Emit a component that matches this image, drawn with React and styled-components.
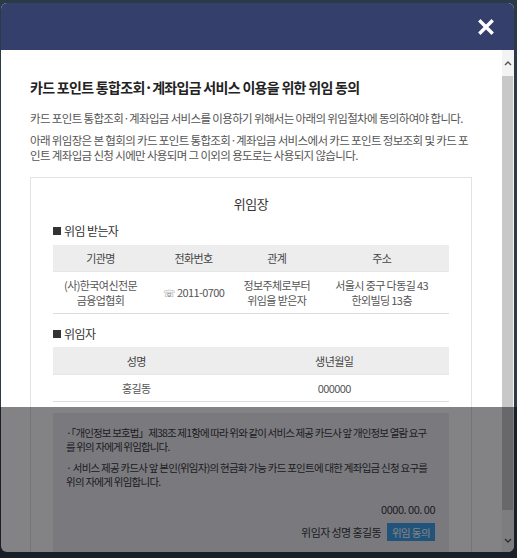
import React from 'react';
import styled, { createGlobalStyle } from 'styled-components';

const GlobalStyle = createGlobalStyle`
  html, body {
    margin: 0;
    padding: 0;
  }
  body {
    background: #2c3947;
    font-family: "Noto Sans CJK KR", "Noto Sans", sans-serif;
  }
`;

const Page = styled.div`
  position: relative;
  height: 558px;
  padding: 3px 3px 6px 1px;
  box-sizing: border-box;
  overflow: hidden;
`;

const Modal = styled.div`
  height: 100%;
  display: flex;
  flex-direction: column;
  border-radius: 6px;
  overflow: hidden;
  background: #fff;
`;

const Header = styled.div`
  height: 47px;
  flex: none;
  background: #343f6c;
  display: flex;
  align-items: center;
  justify-content: flex-end;
  padding-right: 19px;
`;

const CloseButton = styled.button`
  border: 0;
  background: none;
  padding: 0;
  width: 18px;
  height: 18px;
  display: flex;
  align-items: center;
  justify-content: center;
  cursor: pointer;
`;

const Body = styled.div`
  flex: 1;
  display: flex;
  min-height: 0;
`;

const Content = styled.div`
  flex: 1;
  padding: 28px 30px 0 29px;
  overflow: hidden;
  color: #555;
`;

const Rail = styled.div`
  width: 12px;
  flex: none;
  background: #f3f3f3;
  display: flex;
  flex-direction: column;
`;

const RailArrow = styled.div`
  height: ${p => p.$h}px;
  flex: none;
  display: flex;
  align-items: ${p => (p.$down ? 'flex-end' : 'center')};
  padding-bottom: ${p => (p.$down ? 9 : 0)}px;
  box-sizing: border-box;
  justify-content: center;
`;

const Thumb = styled.div`
  flex: 1;
  background: #c8c8c8;
  margin-right: 1px;
`;

const Title = styled.h1`
  margin: 0;
  font-size: 14px;
  line-height: 18px;
  font-weight: 700;
  letter-spacing: -0.7px;
  color: #222;
  white-space: nowrap;
`;

const Para = styled.p`
  margin: ${p => p.$mt}px 0 0;
  font-size: 11.5px;
  line-height: 15px;
  letter-spacing: -0.65px;
  color: #555;
  word-break: break-all;
`;

const Card = styled.div`
  margin-top: 14px;
  border: 1px solid #e3e3e3;
  padding: 17px 22px 40px;
`;

const CardTitle = styled.div`
  text-align: center;
  font-size: 13px;
  line-height: 18px;
  letter-spacing: -0.5px;
  color: #333;
`;

const SectionLabel = styled.div`
  margin-top: ${p => p.$mt}px;
  font-size: 12px;
  line-height: 16px;
  letter-spacing: -0.6px;
  color: #333;
  display: flex;
  align-items: center;
  gap: 2px;

  &::before {
    content: '';
    width: 8px;
    height: 8px;
    background: #333;
    margin-right: 1px;
  }
`;

const Table = styled.table`
  width: 100%;
  margin-top: ${p => p.$mt}px;
  border-collapse: collapse;
  table-layout: fixed;
  border-bottom: 1px solid #dcdcdc;
`;

const Th = styled.th`
  width: ${p => p.$w};
  height: ${p => p.$h}px;
  padding: 0;
  background: #ededed;
  font-weight: 400;
  font-size: 11px;
  letter-spacing: -0.6px;
  color: #444;
  text-align: center;
`;

const Td = styled.td`
  height: ${p => p.$h}px;
  padding: 0;
  font-size: 11px;
  line-height: 15px;
  letter-spacing: -0.6px;
  color: #555;
  text-align: center;
  border-top: 1px solid #e6e6e6;
`;

const Phone = styled.span`
  font-family: "DejaVu Sans", sans-serif;
  font-size: 10px;
  margin-right: 2px;
  color: #777;
`;

const Notice = styled.div`
  margin-top: 11px;
  background: #ececef;
  padding: 13px 14px 14px 13px;
`;

const Bullet = styled.p`
  margin: ${p => p.$mt}px 0 0;
  font-size: 10.5px;
  line-height: 14px;
  letter-spacing: ${p => p.$ls}px;
  color: #333;
  word-break: break-all;
`;

const DateLine = styled.div`
  margin-top: 12px;
  text-align: right;
  font-size: 11px;
  line-height: 16px;
  letter-spacing: -0.5px;
  color: #333;
`;

const SignRow = styled.div`
  margin-top: 6px;
  display: flex;
  justify-content: flex-end;
  align-items: center;
  gap: 6px;
  font-size: 11px;
  letter-spacing: -0.6px;
  color: #333;
`;

const AgreeButton = styled.button`
  border: 0;
  height: 18px;
  padding: 0 5px;
  background: #3a9fe8;
  color: #fff;
  font-family: inherit;
  font-size: 10.5px;
  letter-spacing: -0.6px;
`;

const Shade = styled.div`
  position: absolute;
  left: 0;
  right: 0;
  top: 407px;
  bottom: 0;
  background: rgba(8, 8, 14, 0.5);
  pointer-events: none;
`;

const Chevron = ({ down }) => (
  <svg width="8" height="5" viewBox="0 0 8 5">
    <polyline
      points={down ? '1,1 4,4 7,1' : '1,4 4,1 7,4'}
      fill="none"
      stroke="#555"
      strokeWidth="1.4"
    />
  </svg>
);

const App = () => (
  <>
    <GlobalStyle />
    <Page>
      <Modal>
        <Header>
          <CloseButton aria-label="닫기">
            <svg width="16" height="16" viewBox="0 0 16 16">
              <path d="M2.5 2.5 L13.5 13.5 M13.5 2.5 L2.5 13.5" stroke="#fff" strokeWidth="3.4" strokeLinecap="square" />
            </svg>
          </CloseButton>
        </Header>
        <Body>
          <Content>
            <Title>카드 포인트 통합조회·계좌입금 서비스 이용을 위한 위임 동의</Title>
            <Para $mt={15}>
              카드 포인트 통합조회·계좌입금 서비스를 이용하기 위해서는 아래의 위임절차에 동의하여야 합니다.
            </Para>
            <Para $mt={7}>
              아래 위임장은 본 협회의 카드 포인트 통합조회·계좌입금 서비스에서 카드 포인트 정보조회 및 카드 포인트 계좌입금 신청 시에만 사용되며 그 이외의 용도로는 사용되지 않습니다.
            </Para>

            <Card>
              <CardTitle>위임장</CardTitle>

              <SectionLabel $mt={10}>위임 받는자</SectionLabel>
              <Table $mt={6}>
                <thead>
                  <tr>
                    <Th $w="24%" $h={26}>기관명</Th>
                    <Th $w="23%" $h={26}>전화번호</Th>
                    <Th $w="19%" $h={26}>관계</Th>
                    <Th $w="34%" $h={26}>주소</Th>
                  </tr>
                </thead>
                <tbody>
                  <tr>
                    <Td $h={41}>(사)한국여신전문<br />금융업협회</Td>
                    <Td $h={41}><Phone>☏</Phone>2011-0700</Td>
                    <Td $h={41}>정보주체로부터<br />위임을 받은자</Td>
                    <Td $h={41}>서울시 중구 다동길 43<br />한외빌딩 13층</Td>
                  </tr>
                </tbody>
              </Table>

              <SectionLabel $mt={12}>위임자</SectionLabel>
              <Table $mt={5}>
                <thead>
                  <tr>
                    <Th $w="42%" $h={27}>성명</Th>
                    <Th $w="58%" $h={27}>생년월일</Th>
                  </tr>
                </thead>
                <tbody>
                  <tr>
                    <Td $h={26}>홍길동</Td>
                    <Td $h={26}>000000</Td>
                  </tr>
                </tbody>
              </Table>

              <Notice>
                <Bullet $mt={0} $ls={-0.85}>
                  ·「개인정보 보호법」제38조 제1항에 따라 위와 같이 서비스 제공 카드사 앞 개인정보 열람 요구를 위의 자에게 위임합니다.
                </Bullet>
                <Bullet $mt={7} $ls={-0.75}>
                  · 서비스 제공 카드사 앞 본인(위임자)의 현금화 가능 카드 포인트에 대한 계좌입금 신청 요구를 위의 자에게 위임합니다.
                </Bullet>
                <DateLine>0000. 00. 00</DateLine>
                <SignRow>
                  위임자 성명 홍길동
                  <AgreeButton>위임 동의</AgreeButton>
                </SignRow>
              </Notice>
            </Card>
          </Content>
          <Rail>
            <RailArrow $h={26}><Chevron /></RailArrow>
            <Thumb />
            <RailArrow $h={42} $down><Chevron down /></RailArrow>
          </Rail>
        </Body>
      </Modal>
      <Shade />
    </Page>
  </>
);

export default App;
